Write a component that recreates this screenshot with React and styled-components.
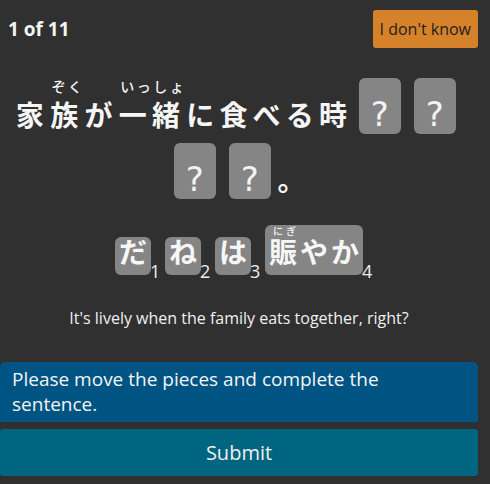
import React from "react";
import styled, { createGlobalStyle } from "styled-components";

const GlobalStyle = createGlobalStyle`
  html, body {
    margin: 0;
    padding: 0;
    background: #2f302f;
  }
  body {
    font-family: "Open Sans", "Noto Sans", sans-serif;
    color: #f2f2f2;
  }
`;

const Page = styled.div`
  width: 478px;
  display: flex;
  flex-direction: column;
`;

const Header = styled.div`
  display: flex;
  justify-content: space-between;
  align-items: center;
  padding: 10px 0 0 8px;
`;

const Counter = styled.div`
  font-size: 19px;
  font-weight: 700;
  color: #f4f4f4;
`;

const SkipButton = styled.button`
  height: 38px;
  padding: 0 7px;
  border: none;
  border-radius: 3px;
  background: #d6822a;
  color: #1e1e1e;
  font-family: "Open Sans", sans-serif;
  font-size: 16px;
`;

const Sentence = styled.div`
  margin-top: 30px;
  display: flex;
  flex-wrap: wrap;
  justify-content: center;
  align-items: flex-end;
  row-gap: 9px;
  font-family: "Noto Sans CJK JP", sans-serif;
`;

const Ruby = styled.span`
  display: inline-flex;
  flex-direction: column;
  align-items: center;
`;

const Rt = styled.span`
  font-family: "Noto Sans CJK JP", sans-serif;
  font-size: ${(p) => (p.$small ? "10px" : "14px")};
  line-height: ${(p) => (p.$small ? "12px" : "16px")};
  height: ${(p) => (p.$small ? "12px" : "16px")};
  letter-spacing: ${(p) => (p.$small ? "3px" : "2.5px")};
  padding-left: ${(p) => (p.$small ? "3px" : "2.5px")};
  font-weight: 500;
  color: #f4f4f4;
  white-space: nowrap;
`;

const Base = styled.span`
  font-size: 28px;
  line-height: 40px;
  letter-spacing: 5.2px;
  font-weight: 600;
  color: #f6f6f6;
  white-space: nowrap;
`;

const Blank = styled.div`
  width: 42px;
  height: 56px;
  margin: 0 6.5px;
  box-sizing: border-box;
  padding-top: 16px;
  border-radius: 6px;
  background: #858585;
  display: flex;
  justify-content: center;
  font-family: "DejaVu Sans", sans-serif;
  font-size: 34px;
  line-height: 40px;
  color: #f2f2f2;
`;

const Pieces = styled.div`
  margin-top: 26px;
  display: flex;
  justify-content: center;
  align-items: flex-end;
`;

const PieceSlot = styled.div`
  position: relative;
  margin: 0 7px;
`;

const PieceBox = styled.div`
  display: flex;
  align-items: flex-end;
  padding: 0 1px 10px 4px;
  border-radius: 6px;
  background: #858585;
  font-family: "Noto Sans CJK JP", sans-serif;
`;

const PieceSeg = styled.span`
  display: inline-flex;
  flex-direction: column;
  align-items: center;
`;

const PieceText = styled.span`
  font-size: 28px;
  line-height: 28px;
  letter-spacing: 3px;
  font-weight: 600;
  color: #f6f6f6;
  white-space: nowrap;
`;

const Index = styled.span`
  position: absolute;
  left: 100%;
  bottom: -5px;
  margin-left: -1px;
  font-family: "Open Sans", sans-serif;
  font-size: 18px;
  line-height: 18px;
  color: #eeeeee;
`;

const Translation = styled.div`
  margin-top: 32px;
  text-align: center;
  font-size: 16px;
  line-height: 22px;
  color: #f0f0f0;
`;

const Prompt = styled.div`
  margin-top: 33px;
  padding: 5px 24px 5px 12px;
  border-radius: 5px 5px 0 0;
  background: #005483;
  font-size: 19px;
  line-height: 25px;
  color: #f4f4f4;
`;

const SubmitButton = styled.button`
  margin-top: 7px;
  height: 47px;
  border: none;
  border-radius: 3px;
  background: #006580;
  color: #f0f0f0;
  font-family: "Open Sans", sans-serif;
  font-size: 20px;
`;

const sentence = [
  { base: "家" },
  { base: "族", rt: "ぞく" },
  { base: "が" },
  { base: "一緒", rt: "いっしょ" },
  { base: "に食べる時" },
  { blank: true },
  { blank: true },
  { blank: true },
  { blank: true },
  { base: "。" },
];

const pieces = [
  [{ base: "だ" }],
  [{ base: "ね" }],
  [{ base: "は" }],
  [{ base: "賑", rt: "にぎ" }, { base: "やか" }],
];

export default function App() {
  return (
    <>
      <GlobalStyle />
      <Page>
        <Header>
          <Counter>1 of 11</Counter>
          <SkipButton>I don't know</SkipButton>
        </Header>
        <Sentence>
          {sentence.map((s, i) =>
            s.blank ? (
              <Blank key={i}>?</Blank>
            ) : s.rt ? (
              <Ruby key={i}>
                <Rt>{s.rt}</Rt>
                <Base>{s.base}</Base>
              </Ruby>
            ) : (
              <Base key={i}>{s.base}</Base>
            )
          )}
        </Sentence>
        <Pieces>
          {pieces.map((segs, i) => (
            <PieceSlot key={i}>
              <PieceBox>
                {segs.map((s, j) => (
                  <PieceSeg key={j}>
                    {s.rt && <Rt $small>{s.rt}</Rt>}
                    <PieceText>{s.base}</PieceText>
                  </PieceSeg>
                ))}
              </PieceBox>
              <Index>{i + 1}</Index>
            </PieceSlot>
          ))}
        </Pieces>
        <Translation>It's lively when the family eats together, right?</Translation>
        <Prompt>Please move the pieces and complete the sentence.</Prompt>
        <SubmitButton>Submit</SubmitButton>
      </Page>
    </>
  );
}
